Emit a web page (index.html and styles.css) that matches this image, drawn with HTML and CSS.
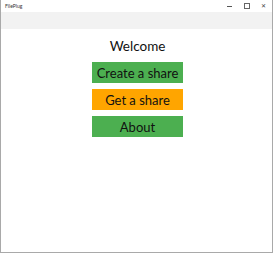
FILE: index.html
```html
<!DOCTYPE html>
<html lang="en">
<head>
  <meta charset="UTF-8" />
  <title>FilePlug</title>
  <link rel="stylesheet" href="styles.css">
</head>
<body>
  <div class="window">
    <div class="titlebar">
      <span class="title">FilePlug</span>
      <div class="controls">
        <span class="ctl ctl-min"></span>
        <span class="ctl ctl-max"></span>
        <span class="ctl ctl-close">&#x2715;</span>
      </div>
    </div>
    <div class="topband"></div>

    <div class="content">
      <h1>Welcome</h1>
      <button class="btn green">Create a share</button>
      <button class="btn orange">Get a share</button>
      <button class="btn green">About</button>
    </div>
  </div>
</body>
</html>
```

FILE: styles.css
```css
body {
  margin: 0;
  padding: 0;
  font-family: Lato, "Noto Sans", sans-serif;
  background: #fff;
}

.window {
  width: 273px;
  height: 253px;
  box-sizing: border-box;
  border: 1px solid #a9a9a9;
  border-top: none;
  background: #fff;
  display: flex;
  flex-direction: column;
}

.titlebar {
  height: 12px;
  display: flex;
  align-items: center;
  justify-content: space-between;
  padding-left: 4px;
}

.title {
  font-size: 5px;
  color: #333;
}

.controls {
  display: flex;
  align-items: center;
  height: 12px;
}

.ctl {
  width: 17px;
  display: flex;
  align-items: center;
  justify-content: center;
  color: #444;
}

.ctl-min::before {
  content: "";
  width: 5px;
  height: 1px;
  background: #555;
}

.ctl-max::before {
  content: "";
  width: 4px;
  height: 4px;
  border: 1px solid #666;
}

.ctl-close {
  font-size: 6px;
  line-height: 1;
}

.topband {
  height: 17px;
  background: #f2f2f2;
}

.content {
  display: flex;
  flex-direction: column;
  align-items: center;
  padding-top: 9px;
  padding-left: 2px;
}

h1 {
  margin: 0 0 8px;
  font-size: 13.5px;
  font-weight: normal;
  line-height: 16px;
  color: #111;
}

.btn {
  width: 91px;
  height: 21px;
  margin-bottom: 6px;
  padding: 0;
  border: none;
  font-family: inherit;
  font-size: 13px;
  color: #111;
}

.green {
  background-color: #4caf50;
}

.orange {
  background-color: #ffa500;
}
```
